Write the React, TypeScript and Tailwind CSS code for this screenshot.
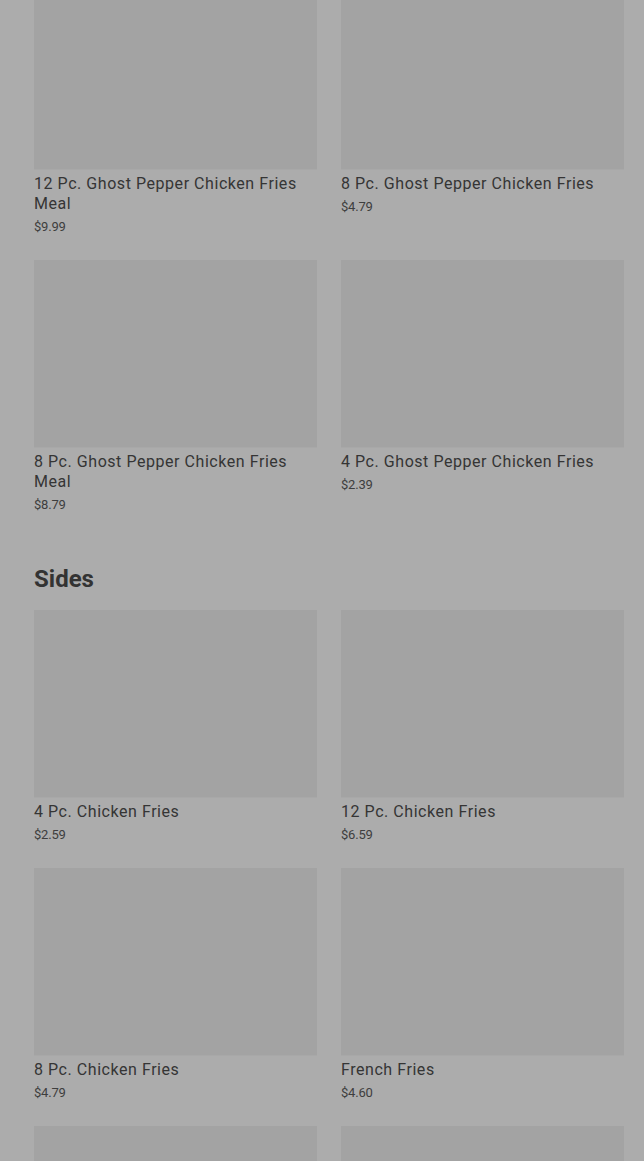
import React from 'react'

type Item = {
  name: string
  price: string
}

const ghostItems: Item[] = [
  { name: '12 Pc. Ghost Pepper Chicken Fries Meal', price: '$9.99' },
  { name: '8 Pc. Ghost Pepper Chicken Fries', price: '$4.79' },
  { name: '8 Pc. Ghost Pepper Chicken Fries Meal', price: '$8.79' },
  { name: '4 Pc. Ghost Pepper Chicken Fries', price: '$2.39' },
]

const sideItems: Item[] = [
  { name: '4 Pc. Chicken Fries', price: '$2.59' },
  { name: '12 Pc. Chicken Fries', price: '$6.59' },
  { name: '8 Pc. Chicken Fries', price: '$4.79' },
  { name: 'French Fries', price: '$4.60' },
  { name: 'Onion Rings', price: '$3.29' },
  { name: 'Mozzarella Sticks', price: '$3.99' },
]

const MenuCard: React.FC<{ item: Item }> = ({ item }) => (
  <div className="flex flex-col">
    <div className="h-[188px] w-full bg-[#a3a3a3] border-b border-[#a8a8a8]" />
    <p className="mt-[4px] text-[16px] leading-[20px] text-[#353535] tracking-[0.55px]">
      {item.name}
    </p>
    <p className="mt-[4px] text-[13px] leading-[18px] text-[#3e3e3e] tracking-[-0.2px]">
      {item.price}
    </p>
  </div>
)

const App: React.FC = () => {
  return (
    <div
      className="min-h-screen w-full overflow-hidden bg-[#acacac]"
      style={{ fontFamily: 'Roboto, "Liberation Sans", sans-serif' }}
    >
      <div className="-mt-[18px] pl-[34px] pr-[20px]">
        <div className="grid grid-cols-2 gap-x-[24px] gap-y-[24px]">
          {ghostItems.map((item) => (
            <MenuCard key={item.name} item={item} />
          ))}
        </div>

        <h2 className="mt-[51px] mb-[17px] text-[24px] leading-[28px] font-bold text-[#333333]">
          Sides
        </h2>

        <div className="grid grid-cols-2 gap-x-[24px] gap-y-[24px]">
          {sideItems.map((item) => (
            <MenuCard key={item.name} item={item} />
          ))}
        </div>
      </div>
    </div>
  )
}

export default App
